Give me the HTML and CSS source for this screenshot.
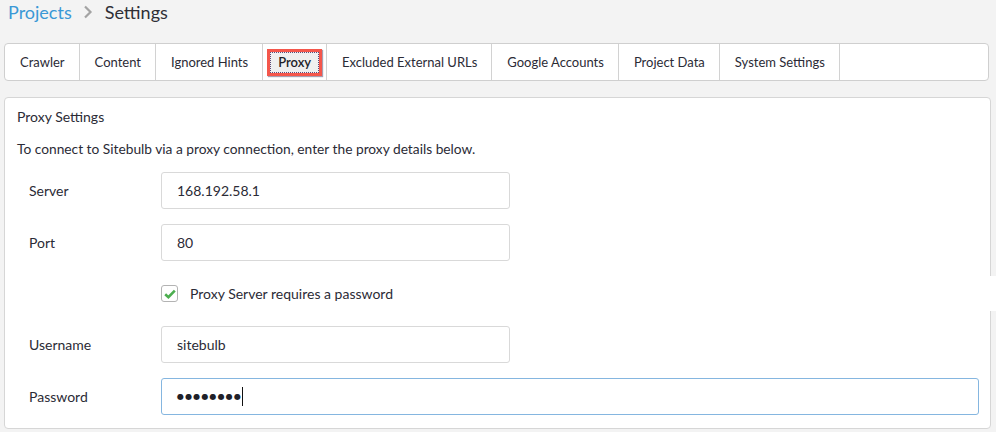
FILE: index.html
```html
<!DOCTYPE html>
<html lang="en">
<head>
<meta charset="utf-8">
<title>Settings</title>
<link rel="stylesheet" href="styles.css">
</head>
<body>
<div class="page">
  <nav class="crumbs">
    <a class="crumb-link">Projects</a>
    <svg class="crumb-sep" width="10" height="14" viewBox="0 0 10 14"><path d="M2 1.5 L7.5 7 L2 12.5" fill="none" stroke="#a3a3a3" stroke-width="2.2"/></svg>
    <span class="crumb-current">Settings</span>
  </nav>

  <div class="tabs">
    <div class="tab">Crawler</div>
    <div class="tab">Content</div>
    <div class="tab">Ignored Hints</div>
    <div class="tab tab-active"><span class="focus-box"><span class="focus-inner">Proxy</span></span></div>
    <div class="tab">Excluded External URLs</div>
    <div class="tab">Google Accounts</div>
    <div class="tab">Project Data</div>
    <div class="tab">System Settings</div>
  </div>

  <section class="panel">
    <div class="panel-title">Proxy Settings</div>
    <p class="desc">To connect to Sitebulb via a proxy connection, enter the proxy details below.</p>

    <div class="form-row">
      <label class="field-label">Server</label>
      <div class="field">168.192.58.1</div>
    </div>
    <div class="form-row">
      <label class="field-label">Port</label>
      <div class="field">80</div>
    </div>
    <div class="check-row">
      <span class="checkbox">
        <svg width="12" height="10" viewBox="0 0 12 10"><path d="M1.2 5.2 L4.4 8.2 L10.8 1.6" fill="none" stroke="#4cae4f" stroke-width="2.6"/></svg>
      </span>
      <span class="check-label">Proxy Server requires a password</span>
    </div>
    <div class="form-row">
      <label class="field-label">Username</label>
      <div class="field">sitebulb</div>
    </div>
    <div class="form-row">
      <label class="field-label">Password</label>
      <div class="field field-wide field-focus"><span class="dots">●●●●●●●●</span><span class="caret"></span></div>
    </div>
  </section>
</div>
</body>
</html>
```

FILE: styles.css
```css
html, body {
  margin: 0;
  padding: 0;
  overflow: hidden;
}
body {
  background: #f3f3f3;
  font-family: "Lato", "Open Sans", sans-serif;
  color: #2b2b36;
  font-size: 13px;
}
.page {
  width: 996px;
  height: 432px;
  padding: 0 0 0 4px;
  box-sizing: border-box;
}
.crumbs {
  display: flex;
  align-items: center;
  height: 24px;
  padding-left: 4px;
  font-size: 18px;
  line-height: 24px;
}
.crumb-link {
  color: #3a98d6;
}
.crumb-sep {
  margin: 0 12px 0 11px;
}
.crumb-current {
  color: #2f2f36;
}
.tabs {
  margin-top: 19px;
  width: 985px;
  height: 38px;
  box-sizing: border-box;
  border: 1px solid #cfcfcf;
  border-radius: 4px;
  background: #fff;
  display: flex;
}
.tab {
  padding: 0 14px 0 15px;
  line-height: 36px;
  border-right: 1px solid #d2d2d2;
  white-space: nowrap;
}
.tab-active {
  padding: 0 4px 0 4px;
  display: flex;
  align-items: center;
}
.focus-box {
  display: block;
  border: 3px solid #f4564b;
  background: #efefef;
  line-height: 17px;
  box-shadow: 1px 1px 1px rgba(60, 40, 80, 0.45);
}
.focus-inner {
  display: block;
  border: 1px dotted #5a4a78;
  padding: 1px 7px 1px 7px;
  color: #1e1e28;
  font-weight: 600;
}
.panel {
  margin-top: 16px;
  width: 987px;
  height: 332px;
  box-sizing: border-box;
  border: 1px solid #d6d6d6;
  border-radius: 4px;
  background: #fff;
  padding: 9px 11px 0 12px;
  font-size: 14px;
}
.panel-title {
  line-height: 20px;
}
.desc {
  margin: 12px 0 13px;
  line-height: 20px;
  font-size: 13.75px;
}
.form-row {
  display: flex;
  align-items: center;
  margin-bottom: 15px;
}
.field-label {
  width: 144px;
  padding-left: 12px;
  box-sizing: border-box;
  flex: none;
}
.field {
  width: 349px;
  height: 37px;
  box-sizing: border-box;
  border: 1px solid #d9d9d9;
  border-radius: 3px;
  padding-left: 15px;
  display: flex;
  align-items: center;
  color: #2b2b36;
}
.field-wide {
  flex: 1;
  width: auto;
}
.field-focus {
  border-color: #85b6e0;
}
.dots {
  font-size: 8px;
  letter-spacing: 1.15px;
  color: #202028;
  font-family: "DejaVu Sans", sans-serif;
}
.caret {
  width: 1px;
  height: 19px;
  background: #111;
  margin-left: 0;
}
.check-row {
  display: flex;
  align-items: center;
  height: 35px;
  margin: 0 -17px 15px 144px;
  background: #fff;
  position: relative;
}
.checkbox {
  width: 17px;
  height: 17px;
  box-sizing: border-box;
  border: 1px solid #b3b3b3;
  border-radius: 3px;
  display: flex;
  align-items: center;
  justify-content: center;
  margin-right: 12px;
  background: #fff;
}
.check-label {
  line-height: 20px;
}
```
